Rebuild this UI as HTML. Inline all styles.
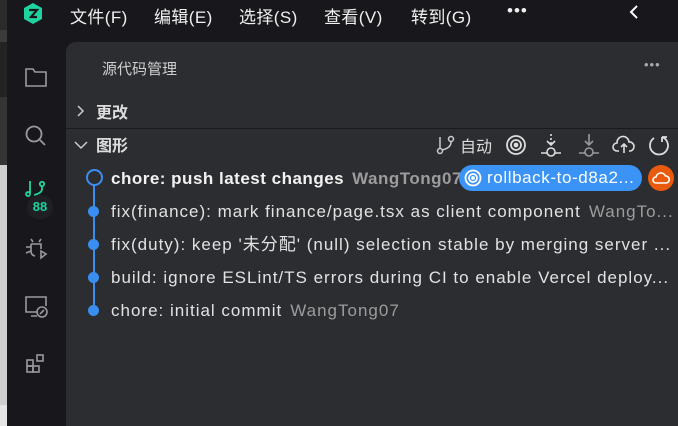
<!DOCTYPE html>
<html style="width:678px;height:426px;overflow:hidden"><head><meta charset="utf-8"><style>
*{margin:0;padding:0;box-sizing:border-box}
body{width:678px;height:426px;overflow:hidden;background:#18181c;font-family:"Liberation Sans","Noto Sans CJK SC",sans-serif;position:relative;color:#e4e4e4}
.a{position:absolute;white-space:nowrap}
.menu{top:3px;font-size:17px;color:#f0f0f0;letter-spacing:0.4px}
.panel{position:absolute;left:66px;top:42px;width:612px;height:384px;background:#2c2d31;border-top-left-radius:10px}
.row{font-size:17px;color:#e2e2e2;letter-spacing:1px;line-height:20px;height:20px}
.au{color:#9c9c9c;margin-left:8px}
.dot{position:absolute;left:88px;width:11px;height:11px;border-radius:50%;background:#3a8ef0}
</style></head><body>
<div class="a" style="left:0;top:0;width:7px;height:30px;background:#2b2b2b"></div>
<div class="a" style="left:0;top:30px;width:7px;height:12px;background:#3c3c3c"></div>
<div class="a" style="left:0;top:42px;width:7px;height:55px;background:#232323"></div>
<div class="a" style="left:0;top:97px;width:7px;height:68px;background:#353535"></div>
<div class="a" style="left:0;top:165px;width:7px;height:240px;background:#cfcfcf"></div>
<div class="a" style="left:0;top:405px;width:7px;height:21px;background:#e6e6e6"></div>
<svg class="a" style="left:23px;top:3px" width="20" height="22" viewBox="0 0 20 22"><polygon points="10,0 19,5 19,16 10,21 1,16 1,5" fill="#1fd3a0"/><path d="M6 7h8l-6 7h6" stroke="#18181c" stroke-width="2.2" fill="none"/></svg>
<div class="a menu" style="left:70px">文件(F)</div>
<div class="a menu" style="left:154px">编辑(E)</div>
<div class="a menu" style="left:239px">选择(S)</div>
<div class="a menu" style="left:324px">查看(V)</div>
<div class="a menu" style="left:411px">转到(G)</div>
<div class="a" style="left:507px;top:1px;font-size:17px;color:#eee;letter-spacing:1px">•••</div>
<svg class="a" style="left:628px;top:4px" width="12" height="16"><path d="M9 2L3 8l6 6" stroke="#fff" stroke-width="2" fill="none"/></svg>
<svg class="a" style="left:24px;top:66px" width="24" height="22" fill="none" stroke="#9a9a9e" stroke-width="1.6"><path d="M2 3h7l2 3h11v14H2z"/></svg>
<svg class="a" style="left:24px;top:124px" width="24" height="24" fill="none" stroke="#9a9a9e" stroke-width="1.8"><circle cx="10" cy="10" r="7.5"/><path d="M16 16l5 5"/></svg>
<svg class="a" style="left:25px;top:180px" width="24" height="22" fill="none" stroke="#1fd3a0" stroke-width="1.8"><path d="M5 1v13M5 14a2 2 0 1 0 0 .1M17 6v3q0 4-8 6"/><circle cx="17" cy="4" r="2.2"/></svg>
<div class="a" style="left:27px;top:195px;width:26px;height:24px;border-radius:12px;background:#1f2023;color:#1fd3a0;font-size:13px;font-weight:bold;text-align:center;line-height:24px">88</div>
<svg class="a" style="left:24px;top:235px" width="24" height="26" fill="none" stroke="#9a9a9e" stroke-width="1.6"><path d="M7 4l2 3M17 4l-2 3M7 9h10v5M7 9v7q0 4 4 5M2 12h5M2 18l5-2M17 16l5 3-5 4z"/></svg>
<svg class="a" style="left:24px;top:295px" width="26" height="26" fill="none" stroke="#9a9a9e" stroke-width="1.6"><path d="M14 17H2V2h20v9M7 21h6"/><circle cx="18" cy="17" r="5"/><path d="M16 19l4-4"/></svg>
<svg class="a" style="left:25px;top:353px" width="22" height="22" fill="none" stroke="#9a9a9e" stroke-width="1.6"><rect x="2" y="7" width="6" height="6"/><rect x="2" y="13" width="6" height="6"/><rect x="8" y="13" width="6" height="6"/><rect x="12" y="2" width="6" height="6"/></svg>
<div class="panel"></div>
<div class="a" style="left:102px;top:58px;font-size:15px;color:#cfcfcf">源代码管理</div>
<div class="a" style="left:644px;top:57px;font-size:13px;color:#aaa;letter-spacing:1px">•••</div>
<svg class="a" style="left:76px;top:104px" width="10" height="14"><path d="M2 2l5 5-5 5" stroke="#ccc" stroke-width="1.5" fill="none"/></svg>
<div class="a" style="left:96px;top:99px;font-size:16px;font-weight:bold;color:#ddd">更改</div>
<div class="a" style="left:66px;top:128px;width:612px;height:1px;background:#1a1a1d"></div>
<svg class="a" style="left:74px;top:140px" width="14" height="10"><path d="M1 2l6 6 6-6" stroke="#ccc" stroke-width="1.5" fill="none"/></svg>
<div class="a" style="left:96px;top:132px;font-size:16px;font-weight:bold;color:#ddd">图形</div>
<svg class="a" style="left:436px;top:135px" width="22" height="20" fill="none" stroke="#ccc" stroke-width="1.5"><circle cx="4" cy="16" r="2.5"/><circle cx="15" cy="4" r="2.5"/><path d="M4 2v11M15 7q0 6-9 8"/></svg>
<div class="a" style="left:460px;top:133px;font-size:16px;color:#ddd">自动</div>
<svg class="a" style="left:505px;top:134px" width="22" height="22" fill="none" stroke="#ddd" stroke-width="1.8"><circle cx="11" cy="11" r="9"/><circle cx="11" cy="11" r="5"/><circle cx="11" cy="11" r="1.5" fill="#ddd"/></svg>
<svg class="a" style="left:540px;top:133px" width="22" height="24" fill="none" stroke="#ddd" stroke-width="1.6"><path d="M11 1v2M11 5v2M11 9v3M7 8l4 4 4-4M1 20h6M15 20h6"/><circle cx="11" cy="19" r="4"/></svg>
<svg class="a" style="left:578px;top:133px" width="22" height="24" fill="none" stroke="#999" stroke-width="1.6"><path d="M11 1v11M7 8l4 4 4-4M1 20h6M15 20h6"/><circle cx="11" cy="19" r="4"/></svg>
<svg class="a" style="left:612px;top:135px" width="24" height="20" fill="none" stroke="#ddd" stroke-width="1.6"><path d="M7 16H5a4 4 0 0 1 0-8 6 6 0 0 1 12-1 4.5 4.5 0 0 1 1 9h-1M12 18v-9M9 12l3-3 3 3"/></svg>
<svg class="a" style="left:648px;top:134px" width="22" height="22" fill="none" stroke="#ddd" stroke-width="1.8"><path d="M14 3a9 9 0 1 1-8 1M14 3v5M14 3h5"/></svg>
<div class="a" style="left:93px;top:185px;width:2px;height:128px;background:#3a8ef0"></div>
<div class="a" style="left:86px;top:169px;width:17px;height:17px;border-radius:50%;border:2.5px solid #3a8ef0;background:#2c2d31"></div>
<div class="dot" style="top:206px"></div>
<div class="dot" style="top:239px"></div>
<div class="dot" style="top:272px"></div>
<div class="dot" style="top:305px"></div>
<div class="a row" style="left:111px;top:169px;letter-spacing:0.5px"><b style="color:#f2f2f2">chore: push latest changes</b><b class="au">WangTong07</b></div>
<div class="a" style="left:459px;top:165px;width:183px;height:26px;border-radius:13px;background:#3a93f5;color:#fff;font-size:17px;line-height:26px;padding-left:28px;letter-spacing:0.6px">rollback-to-d8a2...</div>
<svg class="a" style="left:464px;top:169px" width="18" height="18" fill="none" stroke="#fff" stroke-width="1.8"><circle cx="9" cy="9" r="7.5"/><circle cx="9" cy="9" r="4"/><circle cx="9" cy="9" r="1" fill="#fff"/></svg>
<div class="a" style="left:648px;top:165px;width:26px;height:26px;border-radius:50%;background:#ea5a0c"></div>
<svg class="a" style="left:652px;top:170px" width="18" height="16" fill="none" stroke="#fff" stroke-width="1.6"><path d="M5 13H4a3 3 0 0 1 0-6 5 5 0 0 1 9.5-1A3.5 3.5 0 0 1 14 13z"/></svg>
<div class="a row" style="left:111px;top:202px">fix(finance): mark finance/page.tsx as client component<span class="au">WangTo...</span></div>
<div class="a row" style="left:111px;top:235px">fix(duty): keep '未分配' (null) selection stable by merging server ...</div>
<div class="a row" style="left:111px;top:268px">build: ignore ESLint/TS errors during CI to enable Vercel deploy...</div>
<div class="a row" style="left:111px;top:301px">chore: initial commit<span class="au">WangTong07</span></div>
</body></html>
